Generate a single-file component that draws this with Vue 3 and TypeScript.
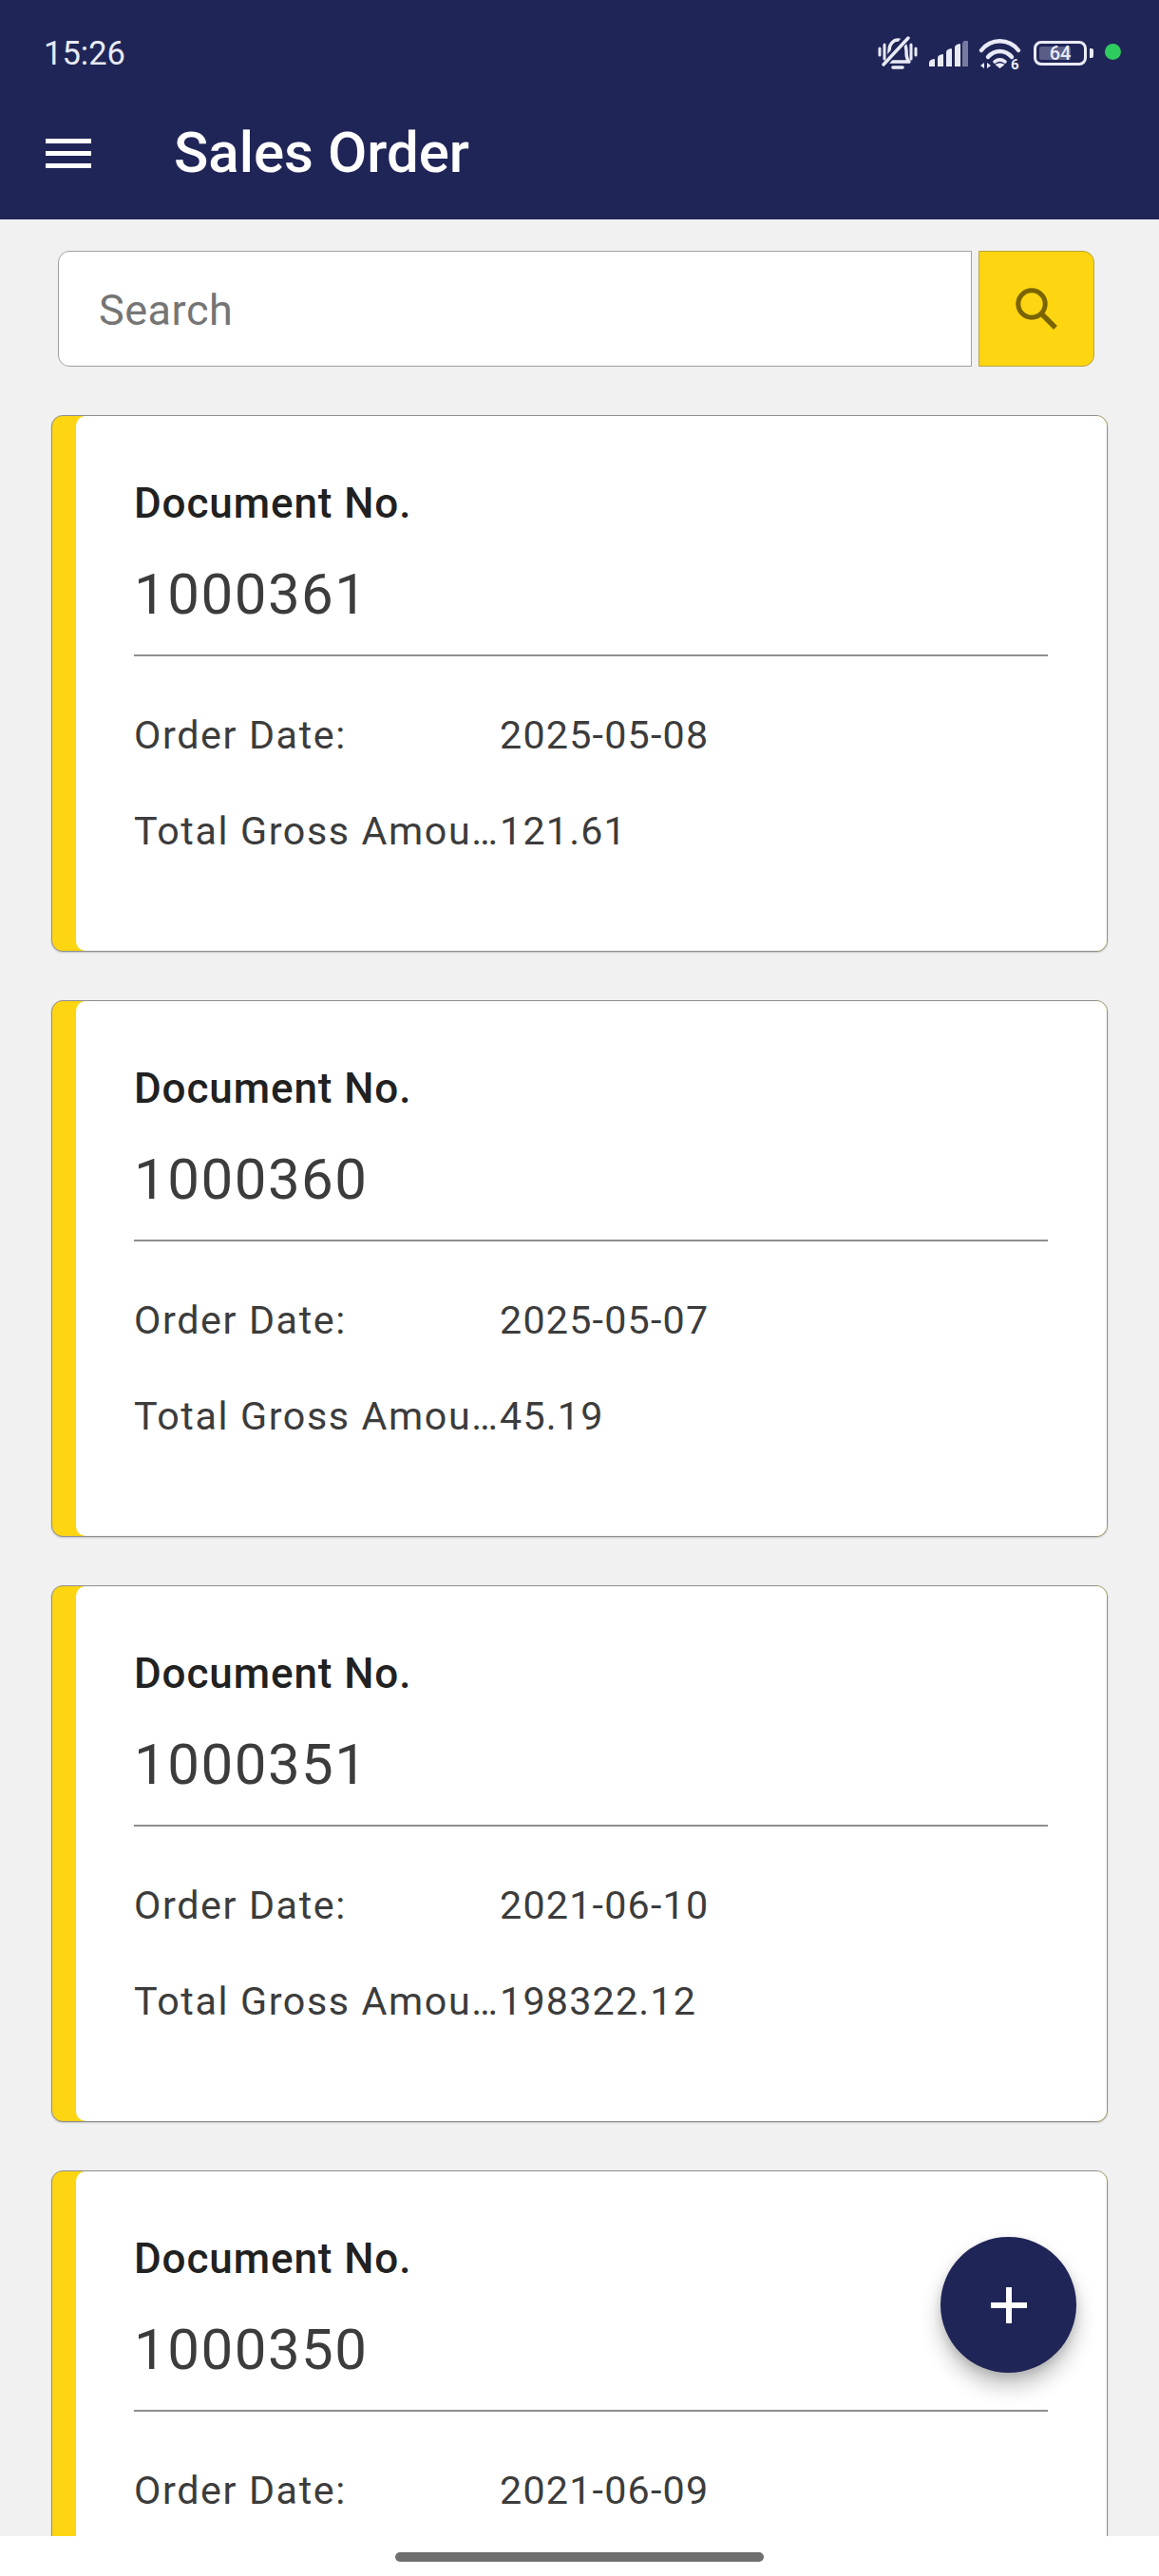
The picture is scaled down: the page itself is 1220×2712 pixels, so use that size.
<script setup lang="ts">
interface Order {
  no: string
  date: string
  total?: string
}

const orders: Order[] = [
  { no: '1000361', date: '2025-05-08', total: '121.61' },
  { no: '1000360', date: '2025-05-07', total: '45.19' },
  { no: '1000351', date: '2021-06-10', total: '198322.12' },
  { no: '1000350', date: '2021-06-09' },
]
</script>

<template>
  <div class="screen">
    <header class="header">
      <div class="status">
        <span class="time">15:26</span>
        <div class="status-icons">
          <svg class="bell" width="42" height="36" viewBox="0 0 42 36" fill="none" stroke="#e8eaf6" stroke-linecap="round" stroke-linejoin="round">
            <path d="M9 27c3-3 3-7 3-12 0-7 5-11 9-11s9 4 9 11c0 5 0 9 3 12z" stroke-width="3.4" />
            <path d="M16 33h10" stroke-width="3.6" />
            <path d="M31 1 6 30" stroke="#202557" stroke-width="8" />
            <path d="M32 2 6 30" stroke-width="3.4" />
            <path d="M2 13v7M7 9v15M35 9v15M40 13v7" stroke-width="3" />
          </svg>
          <svg class="signal" width="41" height="27" viewBox="0 0 41 27">
            <path d="M0 23q0-2 2-3l3-1q1 0 1 1v7H0z" fill="#e8eaf6" />
            <path d="M9 18q0-2 2-3l3-1q1 0 1 1v12H9z" fill="#e8eaf6" />
            <path d="M18 12q0-2 2-3l3-1q1 0 1 1v18h-6z" fill="#e8eaf6" />
            <path d="M27 7q0-2 2-3l3-1q1 0 1 1v23h-6z" fill="#e8eaf6" />
            <path d="M35 3q0-2 2-3h3q1 0 1 1v26h-6z" fill="#777a9f" />
          </svg>
          <svg class="wifi" width="45" height="37" viewBox="0 0 45 37" fill="none" stroke="#e8eaf6" stroke-width="4.4" stroke-linecap="round">
            <path d="M3 13C13 0 32 0 42 13" />
            <path d="M10 20c7-8 18-8 25 0" />
            <path d="M17 25c4-3 7-3 11 0" stroke-width="3.6" />
            <path d="M22.5 32l-5-4c3-2 7-2 10 0z" fill="#e8eaf6" stroke="none" />
            <path d="M6 26v6l-4-3zM9 26v6l4-3z" fill="#e8eaf6" stroke="none" />
            <text x="34" y="32.5" class="wifi-six">6</text>
          </svg>
          <div class="battery">
            <div class="battery-body">
              <div class="battery-fill"></div>
              <span class="battery-text">64</span>
            </div>
            <div class="battery-nub"></div>
          </div>
          <span class="dot"></span>
        </div>
      </div>
      <div class="toolbar">
        <div class="menu"><span></span><span></span><span></span></div>
        <h1 class="title">Sales Order</h1>
      </div>
    </header>

    <main class="content">
      <div class="search-row">
        <div class="search-input">Search</div>
        <button class="search-btn" type="button" aria-label="Search">
          <svg width="44" height="44" viewBox="0 0 44 44" fill="none" stroke="#7a6400" stroke-width="5">
            <circle cx="17" cy="17" r="14.2" />
            <path d="M27 27 42 42" stroke-width="5.4" />
          </svg>
        </button>
      </div>

      <article v-for="o in orders" :key="o.no" class="card">
        <div class="card-inner">
          <div class="doc-label">Document No.</div>
          <div class="doc-no">{{ o.no }}</div>
          <div class="divider"></div>
          <div class="row">
            <span class="row-label">Order Date:</span>
            <span class="row-value">{{ o.date }}</span>
          </div>
          <div v-if="o.total" class="row">
            <span class="row-label">Total Gross Amount:</span>
            <span class="row-value">{{ o.total }}</span>
          </div>
        </div>
      </article>
    </main>

    <nav class="navbar"><span class="handle"></span></nav>

    <button class="fab" type="button" aria-label="Add">
      <svg width="38" height="38" viewBox="0 0 38 38" fill="#fff">
        <rect x="16" y="0" width="6" height="38" />
        <rect x="0" y="16" width="38" height="6" />
      </svg>
    </button>
  </div>
</template>

<style>
html,
body {
  margin: 0;
  background: #fff;
}
</style>

<style scoped>
.screen {
  position: relative;
  width: 1220px;
  height: 2712px;
  display: flex;
  flex-direction: column;
  overflow: hidden;
  background: #f1f1f2;
  font-family: Roboto, "Liberation Sans", sans-serif;
}

.header {
  flex: none;
  height: 231px;
  box-sizing: border-box;
  background: #202557;
  color: #fff;
}

.status {
  height: 112px;
  box-sizing: border-box;
  padding: 0 40px 0 46px;
  display: flex;
  align-items: center;
  justify-content: space-between;
}

.time {
  font-size: 34.5px;
  color: #e8eaf6;
}

.status-icons {
  display: flex;
  align-items: center;
}

.signal {
  margin-left: 12px;
}

.wifi {
  margin: 4px 0 0 11px;
}

.battery {
  margin-left: 13px;
  display: flex;
  align-items: center;
  gap: 3px;
}

.battery-body {
  position: relative;
  width: 56px;
  height: 26px;
  box-sizing: border-box;
  border: 3px solid #e8eaf6;
  border-radius: 8px;
  display: flex;
  align-items: center;
  justify-content: center;
  overflow: hidden;
}

.battery-fill {
  position: absolute;
  left: 3px;
  top: 3px;
  bottom: 3px;
  width: 33px;
  background: #5a5d86;
  border-radius: 2px;
}

.battery-text {
  position: relative;
  font-size: 20px;
  line-height: 20px;
  font-weight: 500;
  color: #e8eaf6;
}

.battery-nub {
  width: 4px;
  height: 10px;
  background: #e8eaf6;
  border-radius: 0 2px 2px 0;
}

.dot {
  margin: 0 0 4px 12px;
  width: 17px;
  height: 17px;
  border-radius: 50%;
  background: #2ecc5f;
}

.wifi-six {
  font-family: Roboto, sans-serif;
  font-size: 15px;
  font-weight: 700;
  fill: #e8eaf6;
  stroke: none;
}

.toolbar {
  height: 98px;
  padding-left: 48px;
  display: flex;
  align-items: center;
}

.menu {
  width: 48px;
  height: 31px;
  display: flex;
  flex-direction: column;
  justify-content: space-between;
}

.menu span {
  height: 5px;
  background: #fff;
}

.title {
  margin: 0 0 0 87px;
  font-size: 60px;
  font-weight: 500;
  line-height: 1;
  color: #fff;
}

.content {
  flex: 1;
  min-height: 0;
  overflow: hidden;
}

.search-row {
  margin: 33px 68px 0 61px;
  height: 122px;
  display: flex;
  gap: 7px;
}

.search-input {
  flex: 1;
  box-sizing: border-box;
  background: #fff;
  border: 1px solid #a0a0a0;
  border-radius: 12px 0 0 12px;
  padding: 2px 0 0 42px;
  display: flex;
  align-items: center;
  font-size: 45px;
  letter-spacing: 0.5px;
  color: #757575;
}

.search-btn {
  width: 122px;
  box-sizing: border-box;
  padding: 0;
  background: #fdd611;
  border: 1px solid #b9a33c;
  border-radius: 0 12px 12px 0;
  display: flex;
  align-items: center;
  justify-content: center;
}

.card {
  margin: 51px 54px 0;
  height: 565px;
  box-sizing: border-box;
  display: flex;
  background: #fdd611;
  border: 1px solid #8e8e8e;
  border-radius: 12px;
  padding-left: 25px;
  box-shadow: 0 1px 2px rgba(0, 0, 0, 0.2);
  overflow: hidden;
}

.card-inner {
  flex: 1;
  background: #fff;
  border-radius: 10px 0 0 10px;
  box-sizing: border-box;
  padding: 62px 62px 0 61px;
}

.doc-label {
  font-size: 44px;
  font-weight: 500;
  letter-spacing: 0.9px;
  line-height: 60px;
  color: #212121;
}

.doc-no {
  margin-top: 24px;
  padding-bottom: 21px;
  font-size: 60px;
  line-height: 84px;
  letter-spacing: 1.5px;
  color: #3c3c3c;
}

.divider {
  height: 2px;
  background: #8e8e8e;
}

.row {
  display: flex;
  align-items: center;
  height: 101px;
  font-size: 41.25px;
  letter-spacing: 1.2px;
  color: #3c3c3c;
}

.divider + .row {
  margin-top: 32px;
}

.row-label {
  flex: none;
  width: 384px;
  margin-right: 1px;
  letter-spacing: 1.6px;
  white-space: nowrap;
  overflow: hidden;
  text-overflow: ellipsis;
}

.navbar {
  flex: none;
  height: 42px;
  box-sizing: border-box;
  background: #fff;
  padding-top: 17px;
  display: flex;
  justify-content: center;
}

.handle {
  width: 388px;
  height: 10px;
  border-radius: 5px;
  background: #6f6f6f;
}

.fab {
  position: absolute;
  left: 990px;
  top: 2355px;
  width: 143px;
  height: 143px;
  padding: 0;
  border: none;
  border-radius: 50%;
  background: #202557;
  box-shadow: 0 14px 22px rgba(0, 0, 0, 0.24), 0 4px 10px rgba(0, 0, 0, 0.12);
  display: flex;
  align-items: center;
  justify-content: center;
}
</style>
